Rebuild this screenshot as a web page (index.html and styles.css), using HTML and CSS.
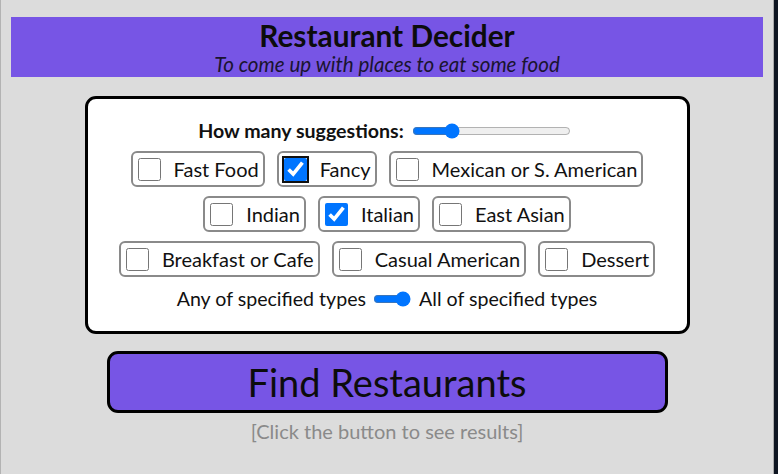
FILE: index.html
```html
<!DOCTYPE html>
<html lang="en">
<head>
<meta charset="utf-8">
<title>Restaurant Decider</title>
<link rel="stylesheet" href="styles.css">
</head>
<body>
<div class="page">
  <header class="banner">
    <h1 class="banner-title">Restaurant Decider</h1>
    <p class="banner-sub">To come up with places to eat some food</p>
  </header>

  <section class="panel">
    <div class="count-row">
      <label class="count-label" for="count">How many suggestions:</label>
      <input id="count" class="count-range" type="range" min="1" max="10" value="3">
    </div>

    <div class="types">
      <div class="type-row">
        <label class="type"><input type="checkbox" class="type-box"><span>Fast Food</span></label>
        <label class="type"><input type="checkbox" class="type-box focused" checked><span>Fancy</span></label>
        <label class="type"><input type="checkbox" class="type-box"><span>Mexican or S. American</span></label>
      </div>
      <div class="type-row">
        <label class="type"><input type="checkbox" class="type-box"><span>Indian</span></label>
        <label class="type"><input type="checkbox" class="type-box" checked><span>Italian</span></label>
        <label class="type"><input type="checkbox" class="type-box"><span>East Asian</span></label>
      </div>
      <div class="type-row">
        <label class="type"><input type="checkbox" class="type-box"><span>Breakfast or Cafe</span></label>
        <label class="type"><input type="checkbox" class="type-box"><span>Casual American</span></label>
        <label class="type"><input type="checkbox" class="type-box"><span>Dessert</span></label>
      </div>
    </div>

    <div class="mode-row">
      <span>Any of specified types</span>
      <input class="mode-toggle" type="range" min="0" max="1" value="1">
      <span>All of specified types</span>
    </div>
  </section>

  <button class="find" type="button">Find Restaurants</button>
  <p class="result">[Click the button to see results]</p>
</div>
</body>
</html>
```

FILE: styles.css
```css
html {
  background: #0e1521;
}
body {
  margin: 0;
  font-family: "Lato", "Noto Sans", sans-serif;
  color: #111;
}
.page {
  box-sizing: border-box;
  width: 774px;
  min-height: 100vh;
  background: #dcdcdc;
  border-left: 1px solid #b3b3b3;
  border-right: 1px solid #a9a9a9;
  padding: 17px 10px 0 10px;
  display: flex;
  flex-direction: column;
  align-items: center;
}
.banner {
  width: 752px;
  background: #7755e5;
  text-align: center;
  padding: 2px 0;
}
.banner-title {
  margin: 0;
  font-size: 29.8px;
  line-height: 34px;
  font-weight: 700;
  color: #0c0c0c;
}
.banner-sub {
  margin: 0;
  font-size: 20.6px;
  line-height: 22px;
  font-style: italic;
  color: #1a1430;
}
.panel {
  box-sizing: border-box;
  width: 605px;
  margin-top: 19px;
  background: #fff;
  border: 3px solid #000;
  border-radius: 11px;
  padding: 21px 0 21px;
  display: flex;
  flex-direction: column;
  align-items: center;
  gap: 9px;
}
.count-row {
  display: flex;
  align-items: center;
  height: 22px;
  gap: 8px;
  padding-right: 5px;
}
.count-label {
  font-weight: 700;
  font-size: 19.6px;
  line-height: 22px;
}
.count-range {
  width: 159px;
  margin: 0;
  accent-color: #0075ff;
}
.types {
  display: flex;
  flex-direction: column;
  gap: 9px;
  align-items: center;
}
.type-row {
  display: flex;
  gap: 12px;
  justify-content: center;
}
.type {
  box-sizing: border-box;
  height: 36px;
  display: inline-flex;
  align-items: center;
  border: 2px solid #8a8a8a;
  border-radius: 6px;
  padding: 0 4px 0 3px;
  font-size: 20px;
  line-height: 22px;
  color: #111;
}
.type-box {
  width: 23px;
  height: 23px;
  margin: 0 13px 0 2px;
  accent-color: #0075ff;
}
.type-box.focused {
  outline: 2px solid #111;
  outline-offset: 0;
  border-radius: 3px;
}
.mode-row {
  margin-top: 2px;
  display: flex;
  align-items: center;
  gap: 8px;
  font-size: 19.6px;
  line-height: 22px;
  color: #111;
}
.mode-toggle {
  width: 38px;
  margin: 0 0 0 -1px;
  accent-color: #0075ff;
}
.find {
  box-sizing: border-box;
  width: 561px;
  height: 62px;
  margin-top: 17px;
  background: #7755e5;
  border: 3px solid #000;
  border-radius: 11px;
  font-family: "Lato", "Noto Sans", sans-serif;
  font-size: 38px;
  color: #0c0c0c;
  padding: 0;
}
.result {
  margin: 7px 0 0;
  font-size: 20px;
  line-height: 22px;
  color: #8a8a8a;
}
```
